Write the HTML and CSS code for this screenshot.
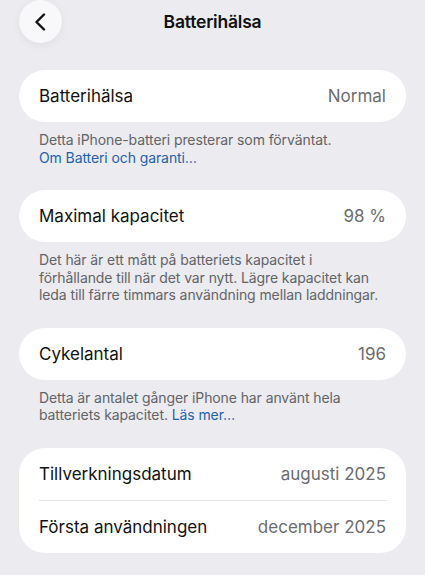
FILE: index.html
```html
<!DOCTYPE html>
<html lang="sv">
<head>
<meta charset="utf-8">
<title>Batterihälsa</title>
<link rel="stylesheet" href="styles.css">
</head>
<body>
<header class="nav">
  <button class="back" aria-label="Tillbaka">
    <svg width="14" height="18" viewBox="0 0 14 18"><path d="M11 1.5 L3.5 9 L11 16.5" fill="none" stroke="#111" stroke-width="2.4" stroke-linecap="round" stroke-linejoin="round"/></svg>
  </button>
  <h1 class="title">Batterihälsa</h1>
</header>
<main class="content">
  <section class="group">
    <div class="card">
      <div class="row"><span class="label">Batterihälsa</span><span class="value">Normal</span></div>
    </div>
    <p class="footer">Detta iPhone-batteri presterar som förväntat.<br><a class="link">Om Batteri och garanti…</a></p>
  </section>
  <section class="group">
    <div class="card">
      <div class="row"><span class="label">Maximal kapacitet</span><span class="value">98 %</span></div>
    </div>
    <p class="footer">Det här är ett mått på batteriets kapacitet i förhållande till när det var nytt. Lägre kapacitet kan leda till färre timmars användning mellan laddningar.</p>
  </section>
  <section class="group">
    <div class="card">
      <div class="row"><span class="label">Cykelantal</span><span class="value">196</span></div>
    </div>
    <p class="footer">Detta är antalet gånger iPhone har använt hela<br><span>batteriets kapacitet.</span> <a class="link">Läs mer…</a></p>
  </section>
  <section class="group">
    <div class="card">
      <div class="row"><span class="label">Tillverkningsdatum</span><span class="value">augusti 2025</span></div>
      <div class="divider"></div>
      <div class="row"><span class="label">Första användningen</span><span class="value">december 2025</span></div>
    </div>
  </section>
</main>
</body>
</html>
```

FILE: styles.css
```css
* { box-sizing: border-box; }
body {
  margin: 0;
  background: #ebebf0;
  font-family: Inter, "Noto Sans", sans-serif;
  color: #111;
  -webkit-font-smoothing: antialiased;
}
.nav {
  position: relative;
  height: 43px;
  display: flex;
  align-items: center;
  justify-content: center;
}
.back {
  position: absolute;
  left: 19px;
  top: 0;
  width: 43px;
  height: 43px;
  border-radius: 50%;
  border: none;
  background: #f8f8fa;
  box-shadow: 0 2px 10px rgba(0,0,0,0.06);
  display: flex;
  align-items: center;
  justify-content: center;
  padding: 0 2px 0 0;
}
.title {
  margin: 0;
  font-size: 17.5px;
  font-weight: 600;
  letter-spacing: -0.2px;
}
.content {
  padding: 27px 19px 0;
}
.card {
  background: #fff;
  border-radius: 26px;
}
.row {
  height: 52px;
  display: flex;
  align-items: center;
  justify-content: space-between;
  padding: 0 20px;
  font-size: 17px;
  letter-spacing: 0;
}
.value { color: #6c6c70; }
.divider {
  height: 1px;
  background: #e3e3e6;
  margin: 0 19px 0 20px;
}
.footer {
  margin: 0;
  padding: 9px 20px 24px;
  font-size: 14px;
  line-height: 17.5px;
  color: #636368;
  letter-spacing: -0.1px;
}
.link { color: #2261ad; }
```
